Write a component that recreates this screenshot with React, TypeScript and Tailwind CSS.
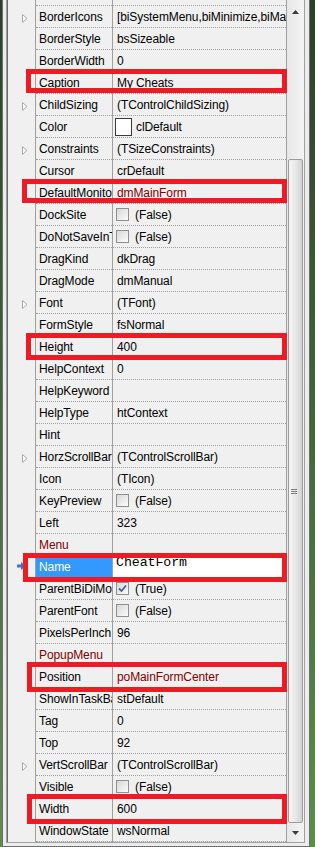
import React from "react";

type Row = {
  name: string;
  value?: string;
  expand?: boolean;
  kind?: "check" | "color" | "edit";
  checked?: boolean;
  refName?: boolean;
  refValue?: boolean;
  selected?: boolean;
};

const ROWS: Row[] = [
  { name: "BorderIcons", value: "[biSystemMenu,biMinimize,biMaximize]", expand: true },
  { name: "BorderStyle", value: "bsSizeable" },
  { name: "BorderWidth", value: "0" },
  { name: "Caption", value: "My Cheats" },
  { name: "ChildSizing", value: "(TControlChildSizing)", expand: true },
  { name: "Color", value: "clDefault", kind: "color" },
  { name: "Constraints", value: "(TSizeConstraints)", expand: true },
  { name: "Cursor", value: "crDefault" },
  { name: "DefaultMonitor", value: "dmMainForm", refValue: true },
  { name: "DockSite", value: "(False)", kind: "check" },
  { name: "DoNotSaveInTaskBar", value: "(False)", kind: "check" },
  { name: "DragKind", value: "dkDrag" },
  { name: "DragMode", value: "dmManual" },
  { name: "Font", value: "(TFont)", expand: true },
  { name: "FormStyle", value: "fsNormal" },
  { name: "Height", value: "400" },
  { name: "HelpContext", value: "0" },
  { name: "HelpKeyword" },
  { name: "HelpType", value: "htContext" },
  { name: "Hint" },
  { name: "HorzScrollBar", value: "(TControlScrollBar)", expand: true },
  { name: "Icon", value: "(TIcon)" },
  { name: "KeyPreview", value: "(False)", kind: "check" },
  { name: "Left", value: "323" },
  { name: "Menu", refName: true },
  { name: "Name", value: "CheatForm", kind: "edit", selected: true },
  { name: "ParentBiDiMode", value: "(True)", kind: "check", checked: true },
  { name: "ParentFont", value: "(False)", kind: "check" },
  { name: "PixelsPerInch", value: "96" },
  { name: "PopupMenu", refName: true },
  { name: "Position", value: "poMainFormCenter", refValue: true },
  { name: "ShowInTaskBar", value: "stDefault" },
  { name: "Tag", value: "0" },
  { name: "Top", value: "92" },
  { name: "VertScrollBar", value: "(TControlScrollBar)", expand: true },
  { name: "Visible", value: "(False)", kind: "check" },
  { name: "Width", value: "600" },
  { name: "WindowState", value: "wsNormal" },
];

// red marker boxes drawn on top of the screenshot
const MARKS = [
  "left-[26px] top-[69px] w-[261px] h-[24px]",
  "left-[22px] top-[179px] w-[265px] h-[24px]",
  "left-[26px] top-[333px] w-[261px] h-[27px]",
  "left-[23px] top-[553px] w-[264px] h-[29px]",
  "left-[27px] top-[662px] w-[260px] h-[30px]",
  "left-[27px] top-[794px] w-[260px] h-[30px]",
];

function Expander() {
  return (
    <svg width="6" height="9" viewBox="0 0 6 9" className="ml-[14px] mt-[2px]">
      <polygon points="0.5,0.5 5,4.5 0.5,8.5" fill="#fafafa" stroke="#a8a8a8" strokeWidth="1" />
    </svg>
  );
}

function Pointer() {
  return (
    <svg width="9" height="8" viewBox="0 0 9 8" className="ml-[9px] -mt-[3px]">
      <rect x="0" y="2.5" width="5" height="3" fill="#3b73cf" />
      <polygon points="4,0 9,4 4,8" fill="#3b73cf" />
    </svg>
  );
}

function Check({ checked }: { checked?: boolean }) {
  return (
    <span className="w-[13px] h-[13px] border border-[#8e8f8f] bg-linear-to-br from-[#d8d8d8] to-[#fbfbfb] flex items-center justify-center shrink-0">
      {checked && (
        <svg width="9" height="9" viewBox="0 0 9 9">
          <path d="M1 4.5 L3.5 7 L8 1.5" fill="none" stroke="#4a5f97" strokeWidth="1.8" />
        </svg>
      )}
    </span>
  );
}

function Value({ row }: { row: Row }) {
  const color = row.refValue ? "text-[#800000]" : "text-black";
  if (row.kind === "edit") {
    return (
      <div className="h-full bg-white pl-[3px] font-['Liberation_Mono',monospace] text-[13.3px] leading-[14px] text-black">
        {row.value}
      </div>
    );
  }
  if (row.kind === "check") {
    return (
      <div className="h-full flex items-center pl-[3px] gap-[6px]">
        <Check checked={row.checked} />
        <span>{row.value}</span>
      </div>
    );
  }
  if (row.kind === "color") {
    return (
      <div className="h-full flex items-center pl-[2px] gap-[4px]">
        <span className="w-[17px] h-[18px] border border-[#3a3a3a] bg-white shrink-0" />
        <span>{row.value}</span>
      </div>
    );
  }
  return <div className={`h-full flex items-center pl-[4px] ${color}`}>{row.value}</div>;
}

function PropRow({ row }: { row: Row }) {
  return (
    <div className="flex h-[22px]">
      <div className="w-[27px] shrink-0 flex items-center">
        {row.expand && <Expander />}
        {row.selected && <Pointer />}
      </div>
      <div className="w-[77px] shrink-0 border-l border-[#a0a0a0]">
        <div
          className={`h-full border-b border-dotted border-[#a0a0a0] flex items-center pl-[3px] overflow-hidden whitespace-nowrap ${
            row.selected ? "bg-[#3399ff] text-white" : row.refName ? "text-[#800000]" : "text-black"
          }`}
        >
          {row.name}
        </div>
      </div>
      <div className="w-[175px] shrink-0 border-l border-r border-[#a0a0a0]">
        <div className="h-full border-b border-dotted border-[#a0a0a0] overflow-hidden whitespace-nowrap">
          <Value row={row} />
        </div>
      </div>
    </div>
  );
}

function ScrollBar() {
  return (
    <div className="w-[17px] shrink-0 flex flex-col bg-linear-to-r from-[#e7e7e7] to-[#f4f4f4]">
      <div className="h-[17px] flex items-center justify-center">
        <svg width="7" height="4" viewBox="0 0 7 4" className="mt-[7px]">
          <polygon points="0,4 3.5,0 7,4" fill="#3c3c3c" />
        </svg>
      </div>
      <div className="h-[142px]" />
      <div className="h-[664px] mx-[1px] rounded-[2px] border border-[#9b9b9b] bg-linear-to-r from-[#f5f5f5] via-[#e8e8e8] to-[#d2d2d2] flex items-center justify-center">
        <div className="flex flex-col gap-[1px] -ml-[3px]">
          <span className="block w-[6px] h-[1px] bg-[#7d7d7d]" />
          <span className="block w-[6px] h-[1px] bg-[#7d7d7d]" />
          <span className="block w-[6px] h-[1px] bg-[#7d7d7d]" />
        </div>
      </div>
      <div className="h-[19px] flex items-center justify-center">
        <svg width="7" height="4" viewBox="0 0 7 4" className="mt-[1px]">
          <polygon points="0,0 3.5,4 7,0" fill="#3c3c3c" />
        </svg>
      </div>
    </div>
  );
}

export default function App() {
  return (
    <div className="relative flex w-[315px] h-[847px] overflow-hidden bg-linear-to-b from-[#2c3f2a] to-[#5c8d4e] font-['Liberation_Sans',Arial,sans-serif] text-[12px] tracking-[-0.1px]">
      <div className="w-[2px] shrink-0" />
      <div className="w-[308px] shrink-0 h-full bg-[#ececec] border-l border-r border-b border-[#6e6e6e] pl-[3px] pr-[4px] pb-[3px]">
        <div className="h-[843px] border-l border-r border-b border-[#a0a0a0]">
          <div className="h-full flex border-l border-[#6a6a6a] bg-[#f0f0f0]">
            <div className="w-[279px] shrink-0 flex flex-col">
              <div className="flex h-[6px]">
                <div className="w-[27px] shrink-0" />
                <div className="w-[77px] shrink-0 border-l border-[#a0a0a0]">
                  <div className="h-full border-b border-dotted border-[#a0a0a0]" />
                </div>
                <div className="w-[175px] shrink-0 border-l border-r border-[#a0a0a0]">
                  <div className="h-full border-b border-dotted border-[#a0a0a0]" />
                </div>
              </div>
              {ROWS.map((r) => (
                <PropRow key={r.name} row={r} />
              ))}
            </div>
            <ScrollBar />
          </div>
        </div>
      </div>
      <div className="w-[5px] shrink-0" />
      {MARKS.map((m) => (
        <div key={m} className={`absolute border-[5px] border-[#ed1c24] ${m}`} />
      ))}
    </div>
  );
}
